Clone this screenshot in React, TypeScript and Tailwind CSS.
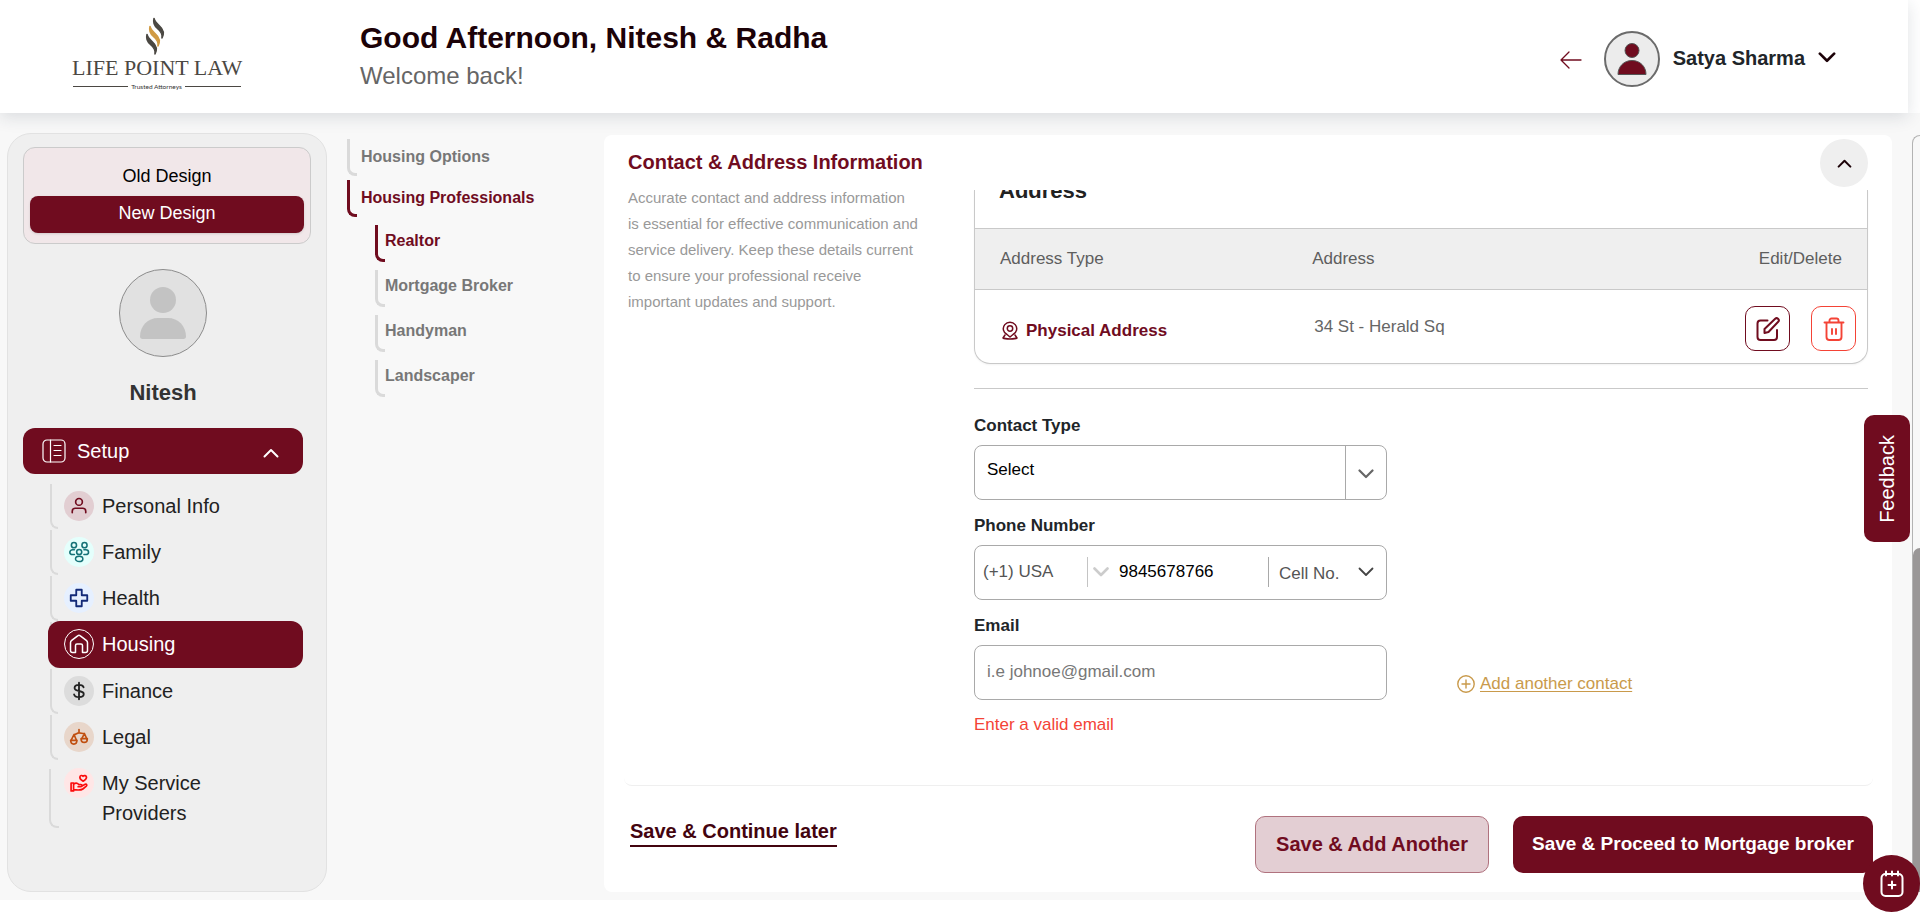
import React from "react";

const svgBase = {
  fill: "none",
  stroke: "currentColor",
  strokeLinecap: "round" as const,
  strokeLinejoin: "round" as const,
  "aria-hidden": true,
};

function Chevron({ className, up = false, weight = 2 }: { className: string; up?: boolean; weight?: number }) {
  return (
    <svg viewBox="0 0 16 10" className={className} {...svgBase} strokeWidth={weight}>
      <path d={up ? "M1.5 8.5 8 2l6.5 6.5" : "M1.5 1.5 8 8l6.5-6.5"} />
    </svg>
  );
}

function Logo() {
  const ribbon = "M0 0c-1 4 0 7 3.500 10 4 3.500 5 5.500 4.500 9.500 2.500-5 1.500-8.500-2.500-12C2 4.500 .5 3 0 0z";
  return (
    <svg viewBox="0 0 172 84" className="h-[84px] w-[172px]" role="img" aria-label="Life Point Law">
      <g strokeWidth="1.6" strokeLinejoin="round">
        <path d={ribbon} transform="translate(82 4.500)" fill="#4b4843" stroke="#4b4843" />
        <path d={ribbon} transform="translate(78 12.500)" fill="#d09a43" stroke="#d09a43" />
        <path d={ribbon} transform="translate(75 20.500)" fill="#4b4843" stroke="#4b4843" />
      </g>
      <text x="0" y="61" fontFamily="Liberation Serif, serif" fontSize="22" fill="#4b4843">
        LIFE POINT LAW
      </text>
      <path d="M1 72.500h55M113 72.500h56" stroke="#4b4843" strokeWidth="1" />
      <text x="84.500" y="75" textAnchor="middle" fontFamily="Lato, sans-serif" fontSize="6.500" fill="#333">
        Trusted Attorneys
      </text>
    </svg>
  );
}

const icons = {
  person: (
    <svg viewBox="0 0 24 24" className="size-[18px]" {...svgBase} strokeWidth={2.2}>
      <circle cx="12" cy="6.500" r="4.500" />
      <path d="M3 21v-2a4 4 0 0 1 4-4h10a4 4 0 0 1 4 4v2" />
    </svg>
  ),
  family: (
    <svg viewBox="0 0 24 24" className="size-[22px]" {...svgBase} strokeWidth={1.7}>
      <circle cx="6.500" cy="4.500" r="2.800" />
      <circle cx="18" cy="4.500" r="2.800" />
      <circle cx="12.200" cy="12" r="2.800" />
      <ellipse cx="12.200" cy="19.500" rx="4" ry="2.800" />
      <path d="M7 9.600H5a3 2.600 0 0 0 0 5.200h2M17.400 9.600h2a3 2.600 0 0 1 0 5.200h-2" />
    </svg>
  ),
  health: (
    <svg viewBox="0 0 24 24" className="size-[22px]" {...svgBase} strokeWidth={2}>
      <path d="M9.500 3h5.500v6h6v6h-6v6H9v-6H3V9h6V3z" />
    </svg>
  ),
  house: (
    <svg viewBox="0 0 20 20" className="size-5" {...svgBase} strokeWidth={1.5}>
      <path d="M1.500 16.500V8.800a3 3 0 0 1 1.200-2.400L9 1.700a1.600 1.600 0 0 1 2 0l6.300 4.700a3 3 0 0 1 1.200 2.400v7.700a2 2 0 0 1-2 2H13.500v-7a1.500 1.500 0 0 0-1.500-1.500H8a1.500 1.500 0 0 0-1.500 1.500v7h-3a2 2 0 0 1-2-2z" />
    </svg>
  ),
  dollar: (
    <svg viewBox="0 0 24 24" className="size-[20px]" {...svgBase} strokeWidth={2.2}>
      <path d="M12 2v20M17.500 7.500C17 5.500 15 4.600 12 4.600c-3.200 0-5.300 1.300-5.300 3.700 0 5.200 11 2.200 11 7.300 0 2.500-2.300 3.800-5.700 3.800-3.300 0-5.400-1.200-5.900-3.400" />
    </svg>
  ),
  scales: (
    <svg viewBox="0 0 24 24" className="size-[20px]" {...svgBase} strokeWidth={2}>
      <path d="M12 3v4M6 9c2.500 0 3.500-2 6-2s3.500 1 6.500 1M6 9l-3.500 7M6 9l3 7M18.500 8 15 14.500M18.500 8l3 6.500" />
      <path d="M2 16h7.500c0 3-1.500 4.500-3.700 4.500S2 19 2 16zM14.500 14H22c0 3-1.500 4.500-3.700 4.500S14.500 17 14.500 14z" />
    </svg>
  ),
  care: (
    <svg viewBox="0 0 24 24" className="size-[20px]" {...svgBase} strokeWidth={2}>
      <path d="M17 9.800c-2.600-1.400-4.200-3-4-5 .3-2 2.700-2.400 3.800-.8 1.300-1.600 4-1 4.200 1 .2 2.200-1.800 3.700-4 4.800z" />
      <path d="M2.500 12h3v9.500h-3zM5.500 13.500c2-1.600 4.500-1.600 6.300.3h2.400c2 0 2 2.600 0 2.600H11M15.500 15.500l4-2c1.600-.6 2.500 1 1.300 2.200l-4.200 3.500c-2.500 2-7 1-11.100 1" />
    </svg>
  ),
};

const navItems = [
  { label: "Personal Info", icon: icons.person, tone: "bg-[#e2ced2] text-[#700c1f]" },
  { label: "Family", icon: icons.family, tone: "bg-[#e4fffc] text-[#147277]" },
  { label: "Health", icon: icons.health, tone: "bg-[#e6f0ff] text-[#132a78]" },
  { label: "Housing", icon: icons.house, tone: "border border-white text-white", active: true },
  { label: "Finance", icon: icons.dollar, tone: "bg-[#dcdcdc] text-[#222222]" },
  { label: "Legal", icon: icons.scales, tone: "bg-[#e8d6ca] text-[#c04f10]" },
  { label: "My Service Providers", icon: icons.care, tone: "bg-[#ffe6e6] text-[#fb0d0d]", tall: true },
];

function Header() {
  return (
    <header className="relative z-10 mr-3 flex h-[113px] shrink-0 items-center bg-white pr-[72px] pl-[72px] shadow-[0_4px_16px_rgba(33,53,71,0.14)]">
      <div className="w-[288px] shrink-0 self-start pt-[14px]">
        <Logo />
      </div>
      <div className="flex-1 pb-[2px]">
        <h1 className="text-[30px] leading-9 font-bold text-[#1c0208]">Good Afternoon, Nitesh &amp; Radha</h1>
        <p className="mt-1 text-2xl leading-8 text-[#666666]">Welcome back!</p>
      </div>
      <div className="flex items-center pt-1">
        <button type="button" aria-label="Back" className="mr-[22px] pt-[2px] text-[#700c1f]">
          <svg viewBox="0 0 22 18" className="h-[18px] w-[22px]" {...svgBase} strokeWidth={1.3}>
            <path d="M21 9H1M9 1 1 9l8 8" />
          </svg>
        </button>
        <span className="flex size-14 items-center justify-center rounded-full border-2 border-[#6b6b6b] bg-[#ececec]">
          <svg viewBox="0 0 30 34" className="h-[34px] w-[30px]" fill="#700c1f" stroke="#555" strokeWidth="1" aria-hidden="true">
            <circle cx="15" cy="8.500" r="7" />
            <path d="M1 32.500c0-8 6-14 14-14s14 6 14 14z" />
          </svg>
        </span>
        <button type="button" className="ml-[13px] flex items-center gap-[13px] pb-[2px] text-xl leading-6 font-bold text-[#212529]">
          Satya Sharma
          <Chevron className="h-[11px] w-[18px] text-[#1c0208]" weight={2.4} />
        </button>
      </div>
    </header>
  );
}

function Sidebar() {
  return (
    <aside className="flex w-[320px] shrink-0 flex-col rounded-3xl border border-[#e2e2e2] bg-[#efefef] pt-[13px] pl-[15px]">
      <div className="mr-[15px] flex h-[97px] flex-col justify-end rounded-xl border border-[#cbcbcb] bg-[#f1e7e9] px-[6px] pb-[10px] text-lg">
        <button type="button" className="h-10 text-black">Old Design</button>
        <button type="button" className="h-[37px] rounded-lg bg-[#700c1f] pb-1 text-white shadow-sm">New Design</button>
      </div>
      <div className="mr-[23px] flex flex-col items-center pt-[25px]">
        <span className="flex size-[88px] items-center justify-center rounded-full border border-[#8c8c8c] bg-[#e1e1e1]">
          <svg viewBox="0 0 46 52" className="h-[52px] w-[46px]" fill="#c3c3c3" aria-hidden="true">
            <circle cx="23" cy="13" r="13" />
            <path d="M0 49.500C0 39 8 31 18 31h10c10 0 18 8 18 18.500 0 1.500-1 2.500-2.500 2.500h-41C1 52 0 51 0 49.500z" />
          </svg>
        </span>
        <h2 className="mt-5 text-[22px] leading-8 font-bold text-[#333333]">Nitesh</h2>
      </div>
      <button type="button" className="mt-[19px] mr-[23px] flex h-[46px] shrink-0 items-center rounded-xl bg-[#700c1f] pr-6 pl-[19px] text-xl text-white">
        <svg viewBox="0 0 24 24" className="size-6" {...svgBase} strokeWidth={1.2}>
          <rect x="1" y="1" width="22" height="22" rx="4" />
          <path d="M8.500 1v22M12 6.500h7M12 11.500h7M12 16.500h7" />
        </svg>
        <span className="ml-[11px]">Setup</span>
        <Chevron up className="mt-1 ml-auto h-[10px] w-4" />
      </button>
      <nav className="mt-[9px] mr-[23px] pl-[25px]">
        <ul>
          {navItems.map((item) => (
            <li key={item.label} className="relative">
              <span
                className={
                  item.tall
                    ? "absolute top-[9px] bottom-2 left-px w-[10px] rounded-bl-lg border-b-2 border-l-2 border-[#dadada]"
                    : "absolute top-px bottom-0 left-[2px] w-2 rounded-bl-lg border-b-2 border-l-2 border-[#dadada]"
                }
              />
              <a
                href="#"
                className={
                  item.active
                    ? "relative flex h-[47px] items-start gap-2 rounded-xl bg-[#700c1f] py-2 pr-10 pl-4 text-xl leading-[30px] text-white"
                    : "relative flex min-h-[46px] items-start gap-2 py-2 pr-10 pl-4 text-xl leading-[30px] text-[#222222]"
                }
              >
                <span className={`flex size-[30px] shrink-0 items-center justify-center rounded-full ${item.tone}`}>{item.icon}</span>
                {item.label}
              </a>
            </li>
          ))}
        </ul>
      </nav>
    </aside>
  );
}

function Steps() {
  const line = "flex h-[37px] w-[10px] shrink-0 rounded-bl-lg border-b-[3px] border-l-[3px]";
  const subs = ["Realtor", "Mortgage Broker", "Handyman", "Landscaper"];
  return (
    <nav className="ml-5 w-[257px] shrink-0 pt-[6px] text-base leading-6 font-bold text-[#777777]">
      <a href="#" className="flex gap-1">
        <span className={`${line} border-[#dadada]`} />
        <span className="pt-[6px]">Housing Options</span>
      </a>
      <a href="#" className="mt-[4px] flex gap-1 text-[#700c1f]">
        <span className={`${line} border-[#700c1f]`} />
        <span className="pt-[6px]">Housing Professionals</span>
      </a>
      <ul className="mt-[8px] flex flex-col gap-2 pl-7">
        {subs.map((s, i) => (
          <li key={s}>
            <a href="#" className={i === 0 ? "flex text-[#700c1f]" : "flex"}>
              <span className={`${line} ${i === 0 ? "border-[#700c1f]" : "border-[#dadada]"}`} />
              <span className="pt-1">{s}</span>
            </a>
          </li>
        ))}
      </ul>
    </nav>
  );
}

function AddressTable() {
  return (
    <div className="overflow-hidden rounded-b-2xl border border-t-0 border-[#c9c9c9] shadow-xs">
      <div className="flex h-[38px] items-start overflow-hidden">
        <h3 className="-mt-[13px] pl-6 text-[22px] leading-7 font-bold text-[#222222]">Address</h3>
      </div>
      <table className="w-full table-fixed text-left text-[17px]">
        <thead className="border-y border-[#c9c9c9] bg-[#efefef] text-[#5e5e5e]">
          <tr className="h-[61px]">
            <th className="w-[35%] pl-[25px] font-normal">Address Type</th>
            <th className="pl-[25px] font-normal">Address</th>
            <th className="w-[20%] pr-[25px] text-right font-normal">Edit/Delete</th>
          </tr>
        </thead>
        <tbody>
          <tr className="h-[73px]">
            <td className="pt-2 pl-[27px]">
              <span className="flex items-center gap-2 font-bold text-[#700c1f]">
                <svg viewBox="0 0 16 19" className="h-[19px] w-4" {...svgBase} strokeWidth={1.5}>
                  <circle cx="8" cy="7.500" r="2.700" />
                  <path d="M5 13.500a6.700 6.500 0 1 1 6 0L8 16zM3 14 1 17c2 1.200 12 1.200 14 0l-2-3" />
                </svg>
                Physical Address
              </span>
            </td>
            <td className="pl-[27px] text-[#666666]">34 St - Herald Sq</td>
            <td className="pt-[5px] pr-[11px]">
              <span className="flex justify-end gap-[21px]">
                <button type="button" aria-label="Edit" className="flex size-[45px] items-center justify-center rounded-[10px] border border-[#700c1f] text-[#700c1f]">
                  <svg viewBox="0 0 24 24" className="size-6" {...svgBase} strokeWidth={2}>
                    <path d="M11.500 3.500H4.500a3 3 0 0 0-3 3V20a3 3 0 0 0 3 3H18a3 3 0 0 0 3-3v-7" />
                    <path d="M8.500 16v-4L19.200 1.800a2 2 0 0 1 2.800 0l.2.200a2 2 0 0 1 0 2.800L12.500 15z" />
                  </svg>
                </button>
                <button type="button" aria-label="Delete" className="flex size-[45px] items-center justify-center rounded-[10px] border border-[#f44336] text-[#f44336]">
                  <svg viewBox="0 0 24 24" className="size-6" {...svgBase} strokeWidth={1.9}>
                    <path d="M2.500 5.500h19M7.500 5.500V3.500a2 2 0 0 1 2-2h5a2 2 0 0 1 2 2v2M4.500 5.500V20a3 3 0 0 0 3 3h9a3 3 0 0 0 3-3V5.500M10 12v5M14 12v5" />
                  </svg>
                </button>
              </span>
            </td>
          </tr>
        </tbody>
      </table>
    </div>
  );
}

function ContactForm() {
  const box = "flex h-[55px] items-center rounded-lg border border-[#a9a9a9] bg-white";
  const label = "block text-[17px] leading-6 font-bold text-[#212529]";
  return (
    <form className="grid grid-cols-[413px_1fr] text-[17px]">
      <div>
        <label htmlFor="contact-type" className={label}>Contact Type</label>
        <div className={`${box} relative mt-[7px]`}>
          <select id="contact-type" className="h-full w-full appearance-none bg-transparent pb-1 pl-3 text-black">
            <option>Select</option>
          </select>
          <span className="pointer-events-none absolute inset-y-0 right-0 flex w-[41px] items-center justify-center border-l border-[#a9a9a9] pt-1 text-[#666666]">
            <Chevron className="h-[10px] w-4" weight={2.2} />
          </span>
        </div>
        <label htmlFor="phone" className={`${label} mt-[14px]`}>Phone Number</label>
        <div className={`${box} mt-[7px]`}>
          <select aria-label="Country code" className="h-[30px] w-[113px] appearance-none border-r border-[#c4c4c4] pl-2 text-[#555555]">
            <option>(+1) USA</option>
          </select>
          <Chevron className="ml-[5px] h-[10px] w-4 shrink-0 text-[#cccccc]" weight={2.6} />
          <input id="phone" type="tel" defaultValue="9845678766" className="ml-[10px] w-0 flex-1 text-black outline-none" />
          <div className="relative flex h-[30px] w-[118px] items-center border-l border-[#a9a9a9]">
            <select aria-label="Phone type" className="h-full w-full appearance-none pt-[3px] pl-[10px] text-[#555555]">
              <option>Cell No.</option>
            </select>
            <Chevron className="pointer-events-none absolute right-[12px] h-[10px] w-4 text-[#444444]" weight={1.8} />
          </div>
        </div>
        <label htmlFor="email" className={`${label} mt-[14px]`}>Email</label>
        <input
          id="email"
          type="email"
          placeholder="i.e johnoe@gmail.com"
          className={`${box} mt-[7px] w-full px-3 text-[17px] placeholder:text-[#777777]`}
        />
        <p className="mt-[13px] leading-6 text-[#f44336]">Enter a valid email</p>
      </div>
      <div className="self-end pb-10 pl-[70px]">
        <a href="#" className="flex items-center gap-[5px] text-[#c99a4b]">
          <svg viewBox="0 0 18 18" className="size-[18px]" {...svgBase} strokeWidth={1.4}>
            <circle cx="9" cy="9" r="8.200" />
            <path d="M9 5v8M5 9h8" />
          </svg>
          <span className="underline underline-offset-2">Add another contact</span>
        </a>
      </div>
    </form>
  );
}

function MainPanel() {
  return (
    <main className="flex min-w-0 flex-1 flex-col rounded-lg bg-white pr-[19px] pl-5">
      <section className="flex h-[651px] rounded-b-lg border-b border-[#efefef] pt-[2px] pr-[5px] pl-1">
        <div className="w-[346px] shrink-0 pt-[13px]">
          <h2 className="text-xl leading-6 font-bold text-[#700c1f]">Contact &amp; Address Information</h2>
          <p className="mt-[11px] w-[291px] text-[15px] leading-[26px] text-[#999999]">
            Accurate contact and address information is essential for effective communication and service delivery. Keep these details current to ensure your professional receive important updates and support.
          </p>
        </div>
        <div className="min-w-0 flex-1">
          <div className="flex h-[53px] justify-end">
            <button type="button" aria-label="Collapse" className="mt-[2px] flex size-12 items-center justify-center rounded-full bg-[#efefef] text-[#1c0208]">
              <Chevron up className="h-[9px] w-[15px]" weight={2.2} />
            </button>
          </div>
          <AddressTable />
          <hr className="mt-6 mb-[25px] border-[#c9c9c9]" />
          <ContactForm />
        </div>
      </section>
      <footer className="flex items-start pt-[30px] text-xl font-bold">
        <a href="#" className="mt-[2px] ml-[6px] border-b-2 border-[#43040f] leading-[27px] text-[#43040f]">Save &amp; Continue later</a>
        <button type="button" className="ml-auto h-[57px] rounded-[10px] border border-[#b0727e] bg-[#e3ced3] px-[20px] pb-[2px] text-[#700c1f]">
          Save &amp; Add Another
        </button>
        <button type="button" className="ml-6 h-[57px] rounded-[10px] bg-[#700c1f] px-[19px] text-[19px] text-white">
          Save &amp; Proceed to Mortgage broker
        </button>
      </footer>
    </main>
  );
}

export default function App() {
  return (
    <div className="relative flex h-screen min-h-[912px] flex-col overflow-hidden bg-white font-['Liberation_Sans',Arial,sans-serif]">
      <Header />
      <div className="mb-3 flex flex-1 bg-[#f8f8f8] pt-5 pb-2 pl-[7px]">
        <Sidebar />
        <Steps />
        <div className="mt-[2px] flex min-w-0 flex-1">
          <MainPanel />
          <div className="ml-5 w-2 shrink-0 rounded-tl-lg border-t border-l border-[#b3b3b3]">
            <div className="mt-[412px] h-[344px] rounded-tl-lg bg-[#9a9797]" />
          </div>
        </div>
      </div>
      <button type="button" className="absolute top-[415px] right-[10px] flex h-[127px] w-[46px] items-center justify-center rounded-[10px] bg-[#700c1f] text-xl text-white">
        <span className="rotate-180 [writing-mode:vertical-rl]">Feedback</span>
      </button>
      <button type="button" aria-label="Add note" className="absolute right-0 bottom-0 flex size-[57px] items-center justify-center rounded-full bg-[#700c1f] text-white">
        <svg viewBox="0 0 24 28" className="h-7 w-6" {...svgBase} strokeWidth={2}>
          <rect x="1.500" y="4" width="21" height="22" rx="4" />
          <path d="M6 1.500v4M12 1.500v4M18 1.500v4M12 11.500v7M8.500 15h7" />
        </svg>
      </button>
    </div>
  );
}
